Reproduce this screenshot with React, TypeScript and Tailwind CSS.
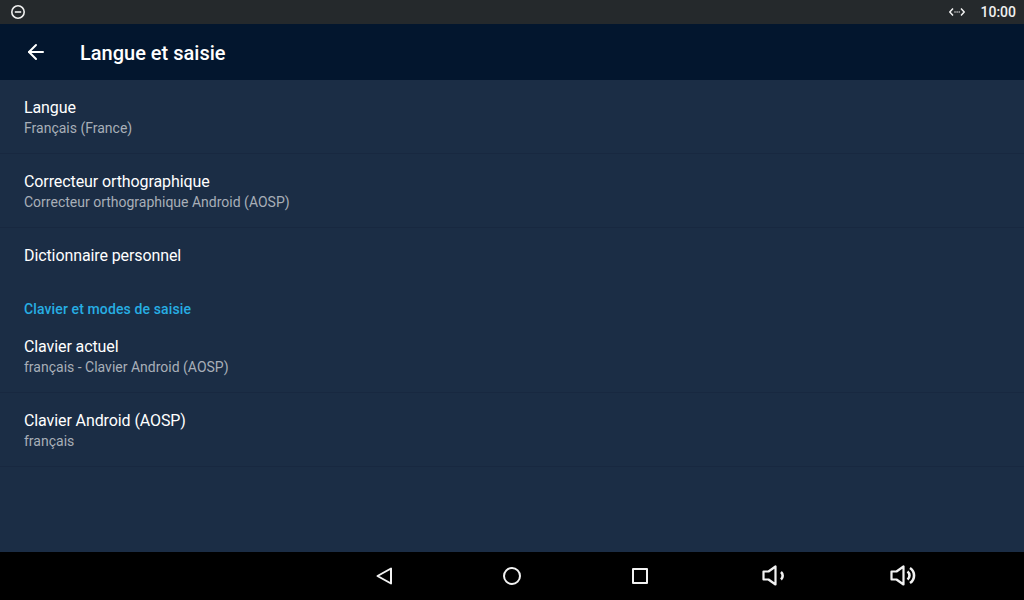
import React from 'react';
import { ArrowLeft } from 'lucide-react';

const font = "font-['Roboto',sans-serif]";

function Row({ title, sub }: { title: string; sub: string }) {
  return (
    <div className="h-[74px] px-6 pt-[17px] border-b border-[#182840]">
      <div className="text-base leading-[22px] tracking-[-0.1px] text-white">{title}</div>
      <div className="-mt-px text-sm leading-[20px] text-[#a8afb8]">{sub}</div>
    </div>
  );
}

function NavIcon({ children }: { children: React.ReactNode }) {
  return (
    <svg width="24" height="24" viewBox="0 0 24 24" fill="none" stroke="#f2f2f2" strokeWidth="2" strokeLinejoin="round" className="overflow-visible">
      {children}
    </svg>
  );
}

export default function App() {
  return (
    <div className={`${font} w-[1024px] h-[600px] flex flex-col overflow-hidden bg-[#1b2d45]`}>
      <div className="h-6 shrink-0 bg-[#25292c] flex items-center justify-between pl-[10px] pr-2">
        <svg width="16" height="16" viewBox="0 0 16 16" fill="none" stroke="#f0f0f0" strokeWidth="1.6">
          <circle cx="8" cy="8" r="6.2" />
          <path d="M4.8 8h6.4" />
        </svg>
        <div className="flex items-center">
          <svg width="16" height="12" viewBox="0 0 16 12" fill="none" stroke="#f0f0f0" strokeWidth="1.5" className="mr-[15px]">
            <path d="M4 2.5 0.8 6 4 9.5M12 2.5 15.2 6 12 9.5" />
            <path d="M5.5 6h1M7.6 6h1M9.7 6h1" />
          </svg>
          <span className="text-sm font-medium text-[#f0f0f0]">10:00</span>
        </div>
      </div>

      <div className="h-14 shrink-0 bg-[#03162e] flex items-center pl-6">
        <ArrowLeft size={24} strokeWidth={2} className="text-white mr-8" />
        <span className="pt-0.5 text-xl font-medium text-white">Langue et saisie</span>
      </div>

      <div className="flex-1">
        <Row title="Langue" sub="Français (France)" />
        <Row title="Correcteur orthographique" sub="Correcteur orthographique Android (AOSP)" />
        <div className="h-[54px] px-6 pt-0.5 flex items-center text-base tracking-[-0.1px] text-white">Dictionnaire personnel</div>
        <div className="h-[37px] px-6 pt-[17px] text-sm leading-[20px] tracking-[0.12px] font-medium text-[#27aee3]">Clavier et modes de saisie</div>
        <Row title="Clavier actuel" sub="français - Clavier Android (AOSP)" />
        <Row title="Clavier Android (AOSP)" sub="français" />
      </div>

      <div className="h-12 shrink-0 bg-black relative">
        <div className="absolute left-[372px] top-3 flex gap-[104px]">
          <NavIcon><path d="M19 4.5v15L5.5 12z" /></NavIcon>
          <NavIcon><circle cx="12" cy="12" r="8" /></NavIcon>
          <NavIcon><rect x="5" y="5" width="14" height="14" /></NavIcon>
          <NavIcon>
            <path d="M7.5 7.5h5l7-5v18l-7-5h-5z" strokeWidth="2.2" />
            <path d="M25 8a5 5 0 0 1 0 7.5" strokeWidth="2.6" />
          </NavIcon>
          <NavIcon>
            <path d="M7.5 7.5h5l7-5v18l-7-5h-5z" strokeWidth="2.2" />
            <path d="M23.5 7.5a5 5 0 0 1 0 8M26 4a9 9 0 0 1 0 15" strokeWidth="2.6" />
          </NavIcon>
        </div>
      </div>
    </div>
  );
}
